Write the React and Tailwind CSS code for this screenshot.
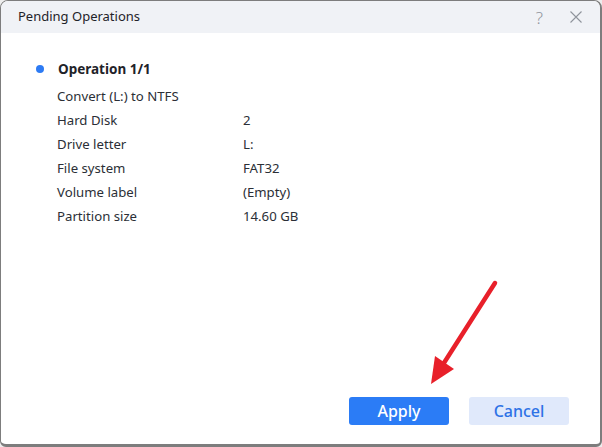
import { useState } from 'react'

const rows = [
  ['Hard Disk', '2'],
  ['Drive letter', 'L:'],
  ['File system', 'FAT32'],
  ['Volume label', '(Empty)'],
  ['Partition size', '14.60 GB'],
]

export default function App() {
  const [open, setOpen] = useState(true)

  return (
    <div
      className="w-[602px] h-[447px] bg-[#ededed] relative"
      style={{ fontFamily: '"Noto Sans", "Open Sans", sans-serif' }}
    >
      <div className="w-full h-full flex flex-col rounded-t-[8px] rounded-b-[6px] overflow-hidden border-l border-t border-r-2 border-b-[3px] border-[#7d7d7d] bg-white">
        {/* title bar */}
        <div className="h-[32px] shrink-0 bg-[#f0f2f6] flex items-center pl-[17px] pr-[18px]">
          <span className="text-[13px] text-[#1f2329]">Pending Operations</span>
          <div className="ml-auto flex items-center gap-[27px] text-[#8f949c]">
            <span className="text-[17px] leading-none font-light">?</span>
            <svg width="12" height="12" viewBox="0 0 12 12" className="stroke-[#8f949c]">
              <path d="M0.5 0.5L11.5 11.5M11.5 0.5L0.5 11.5" strokeWidth="1.1" fill="none" />
            </svg>
          </div>
        </div>

        {/* body */}
        <div className="flex-1 flex flex-col pl-[34px] pt-[24px] pr-[31px] pb-[19px]">
          <div className="flex items-center h-[24px]">
            <span className="ml-[1px] w-[8px] h-[8px] rounded-full bg-[#2d7bf4]" />
            <span className="ml-[14px] text-[13.5px] font-bold text-[#1f2329]">Operation 1/1</span>
          </div>
          <div className="pl-[22px] mt-[4px] text-[13.2px] text-[#2b2f36]">
            <div className="h-[24px] flex items-center">Convert (L:) to NTFS</div>
            {rows.map(([k, v]) => (
              <div key={k} className="h-[24px] flex items-center">
                <span className="w-[186px]">{k}</span>
                <span>{v}</span>
              </div>
            ))}
          </div>

          <div className="mt-auto flex justify-end gap-[20px]">
            <button
              onClick={() => setOpen(!open)}
              className="w-[100px] h-[28px] rounded-[3px] bg-[#2b7cf6] text-white text-[16px] font-medium"
            >
              Apply
            </button>
            <button className="w-[100px] h-[28px] rounded-[3px] bg-[#e0e9fb] text-[#2d72e6] text-[16px] font-medium">
              Cancel
            </button>
          </div>
        </div>
      </div>

      {/* red annotation arrow */}
      <svg className="absolute left-0 top-0 pointer-events-none" width="602" height="447">
        <line x1="495" y1="283" x2="442" y2="366" stroke="#e8202a" strokeWidth="4.5" strokeLinecap="round" />
        <polygon points="431,384 435,356 454,369" fill="#e8202a" />
      </svg>
    </div>
  )
}
